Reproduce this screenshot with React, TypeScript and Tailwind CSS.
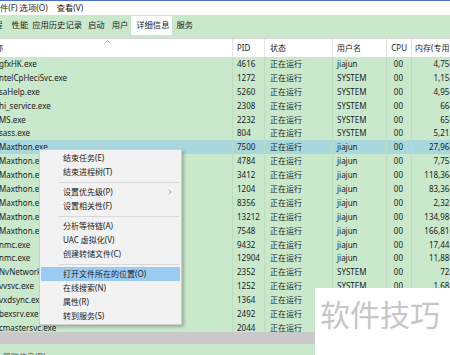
import { ChevronRight } from "lucide-react"

type Proc = [string, string, string, string]

const procs: Proc[] = [
  ["gfxHK.exe", "4616", "jiajun", "4,756 K"],
  ["ntelCpHeciSvc.exe", "1272", "SYSTEM", "1,156 K"],
  ["saHelp.exe", "5260", "SYSTEM", "4,956 K"],
  ["hi_service.exe", "2308", "SYSTEM", "664 K"],
  ["MS.exe", "2232", "SYSTEM", "652 K"],
  ["sass.exe", "804", "SYSTEM", "5,212 K"],
  ["Maxthon.exe", "7500", "jiajun", "27,964 K"],
  ["Maxthon.exe", "4784", "jiajun", "7,752 K"],
  ["Maxthon.exe", "3412", "jiajun", "118,364 K"],
  ["Maxthon.exe", "1204", "jiajun", "83,360 K"],
  ["Maxthon.exe", "8356", "jiajun", "2,324 K"],
  ["Maxthon.exe", "13212", "jiajun", "134,984 K"],
  ["Maxthon.exe", "7548", "jiajun", "166,816 K"],
  ["nmc.exe", "9432", "jiajun", "17,448 K"],
  ["nmc.exe", "12904", "jiajun", "11,880 K"],
  ["NvNetworkService.exe", "2352", "SYSTEM", "728 K"],
  ["vvsvc.exe", "1252", "SYSTEM", "1,684 K"],
  ["vxdsync.exe", "1364", "SYSTEM", "2,060 K"],
  ["bexsrv.exe", "2492", "SYSTEM", "1,024 K"],
  ["cmastersvc.exe", "2044", "SYSTEM", "3,412 K"],
]

// tabs: label, left margin class, selected
const tabs: [string, string, boolean][] = [
  ["进程", "-ml-[14px]", false],
  ["性能", "ml-[9px]", false],
  ["应用历史记录", "ml-[4px]", false],
  ["启动", "ml-[6px]", false],
  ["用户", "ml-[7px]", false],
  ["详细信息", "ml-[3px]", true],
  ["服务", "ml-[4px]", false],
]

type MenuEntry = { label: string; hot?: boolean; sub?: boolean } | "sep"

const menu: MenuEntry[] = [
  { label: "结束任务(E)" },
  { label: "结束进程树(T)" },
  "sep",
  { label: "设置优先级(P)", sub: true },
  { label: "设置相关性(F)" },
  "sep",
  { label: "分析等待链(A)" },
  { label: "UAC 虚拟化(V)" },
  { label: "创建转储文件(C)" },
  "sep",
  { label: "打开文件所在的位置(O)", hot: true },
  { label: "在线搜索(N)" },
  { label: "属性(R)" },
  { label: "转到服务(S)" },
]

function ProcRow({ p, selected }: { p: Proc; selected: boolean }) {
  const cell = "h-full shrink-0 flex items-center border-r border-[#bddcc0] whitespace-nowrap overflow-hidden"
  return (
    <div className={`flex h-[13.9px] shrink-0 ${selected ? "bg-[#a8d7dd]" : ""}`}>
      <div className={`${cell} w-[233px]`}>
        <span className="-ml-px">{p[0]}</span>
      </div>
      <div className={`${cell} w-[32px] pl-[4px]`}>{p[1]}</div>
      <div className={`${cell} w-[68px] pl-[5px]`}>正在运行</div>
      <div className={`${cell} w-[54px] pl-[4px]`}>{p[2]}</div>
      <div className={`${cell} w-[25px] justify-end pr-[8px]`}>00</div>
      <div className={`${cell} w-[52px] justify-end pr-[2px]`}>{p[3]}</div>
    </div>
  )
}

function ContextMenu() {
  return (
    <div className="absolute left-[39px] top-[149px] w-[143px] bg-[#f2f2f2] border border-[#cfcfcf] shadow-[2px_2px_3px_rgba(0,0,0,0.25)] py-[1px] text-[8px] text-[#1b1b1b]">
      {menu.map((m, i) =>
        m === "sep" ? (
          <div key={i} className="h-[6px] flex items-center pl-[19px] pr-[2px]">
            <div className="h-px w-full bg-[#d9d9d9]" />
          </div>
        ) : (
          <div
            key={i}
            className={`h-[14px] flex items-center pl-[22px] pr-[6px] mx-px ${m.hot ? "bg-[#9ccbf2]" : ""}`}
          >
            <span className="flex-1 whitespace-nowrap">{m.label}</span>
            {m.sub && <ChevronRight size={8} strokeWidth={1.5} className="text-[#555]" />}
          </div>
        )
      )}
    </div>
  )
}

export default function App() {
  return (
    <div className="relative w-[450px] h-[355px] overflow-hidden flex flex-col bg-[#cae8cc] text-[#222] font-['Noto_Sans','Noto_Sans_CJK_SC',sans-serif]">
      <div className="h-px shrink-0 bg-[#4a73c4]" />

      {/* menu bar */}
      <div className="h-[14px] shrink-0 flex items-center bg-white text-[8.3px] text-[#1a1a1a] whitespace-nowrap">
        <span>件(F)</span>
        <span className="ml-[2px]">选项(O)</span>
        <span className="ml-[9px]">查看(V)</span>
      </div>

      {/* tabs */}
      <div className="h-[23px] shrink-0 flex items-start pt-[1px] text-[8.3px] whitespace-nowrap">
        {tabs.map(([label, ml, sel]) => (
          <div
            key={label}
            className={`${ml} h-[19px] flex items-center ${sel ? "bg-white pl-[5px] pr-[3px]" : ""}`}
          >
            {label}
          </div>
        ))}
      </div>

      {/* header */}
      <div className="h-[19px] shrink-0 flex bg-white border-t border-[#d4d4d4] text-[8px] whitespace-nowrap">
        <div className="relative w-[233px] shrink-0 flex items-center border-r border-[#e3e3e3] overflow-hidden">
          <span className="-ml-[13px]">名称</span>
          <svg className="absolute left-[104px] top-[1px]" width="7" height="4" viewBox="0 0 7 4">
            <path d="M0.5 3.5 L3.5 0.5 L6.5 3.5" fill="none" stroke="#9a9a9a" strokeWidth="0.8" />
          </svg>
        </div>
        <div className="w-[32px] shrink-0 flex items-center pl-[4px] border-r border-[#e3e3e3]">PID</div>
        <div className="w-[68px] shrink-0 flex items-center pl-[5px] border-r border-[#e3e3e3]">状态</div>
        <div className="w-[54px] shrink-0 flex items-center pl-[4px] border-r border-[#e3e3e3]">用户名</div>
        <div className="w-[25px] shrink-0 flex items-center justify-end pr-[4px] border-r border-[#e3e3e3]">CPU</div>
        <div className="w-[60px] shrink-0 flex items-center pl-[3px]">内存(专用工作集)</div>
      </div>

      {/* rows */}
      <div className="h-[275px] shrink-0 flex flex-col overflow-hidden text-[8px]">
        {procs.map((p, i) => (
          <ProcRow key={i} p={p} selected={i === 6} />
        ))}
      </div>

      {/* horizontal scrollbar */}
      <div className="h-[12px] shrink-0 bg-[#c9c9c9]" />

      {/* footer */}
      <div className="flex-1 flex items-start pt-[7px] pl-[3px] text-[8px] text-[#555]">
        <span>简略信息(D)</span>
      </div>

      <ContextMenu />

      {/* watermark */}
      <div className="absolute left-[315px] top-[288px] right-0 bottom-0 bg-white flex items-start pl-[5px] pt-[7px]">
        <span className="text-[30px] leading-[36px] text-[#c6c6c6] font-['Noto_Sans_CJK_SC',sans-serif] whitespace-nowrap">软件技巧</span>
      </div>
    </div>
  )
}
